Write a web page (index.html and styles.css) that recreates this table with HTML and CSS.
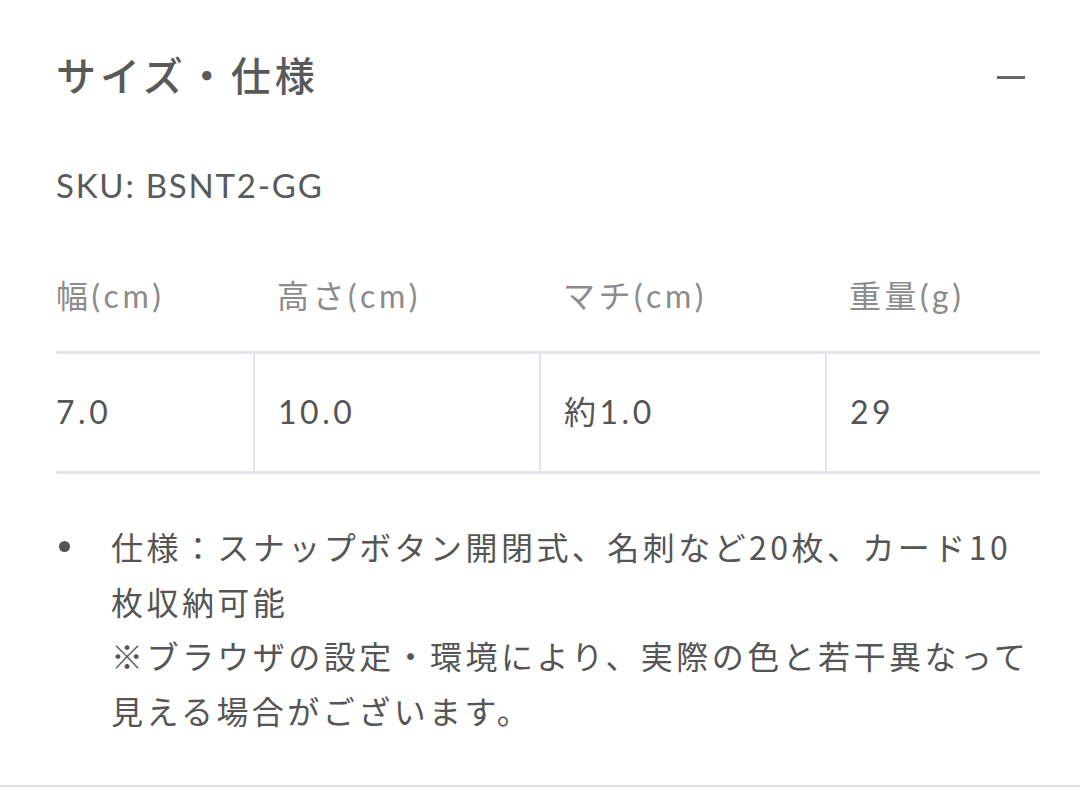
FILE: index.html
```html
<!DOCTYPE html>
<html lang="ja">
<head>
    <meta charset="UTF-8">
    <meta name="viewport" content="width=device-width, initial-scale=1.0">
    <title>サイズ・仕様</title>
    <link rel="stylesheet" href="styles.css">
</head>
<body>

<section class="specs">
  <div class="specs-head">
    <h2 class="specs-title">サイズ・仕様</h2>
    <span class="minus"></span>
  </div>

  <p class="sku">SKU: BSNT2-GG</p>

  <table class="size-table">
    <colgroup>
      <col class="c1"><col class="c2"><col class="c3"><col class="c4">
    </colgroup>
    <thead>
      <tr>
        <th>幅(cm)</th>
        <th>高さ(cm)</th>
        <th>マチ(cm)</th>
        <th>重量(g)</th>
      </tr>
    </thead>
    <tbody>
      <tr>
        <td>7.0</td>
        <td>10.0</td>
        <td>約1.0</td>
        <td>29</td>
      </tr>
    </tbody>
  </table>

  <ul class="notes">
    <li>
      <span class="dot"></span>
      <p>仕様：スナップボタン開閉式、名刺など20枚、カード10<br>枚収納可能<br>※ブラウザの設定・環境により、実際の色と若干異なって<br>見える場合がございます。</p>
    </li>
  </ul>
</section>

</body>
</html>
```

FILE: styles.css
```css
* {
  box-sizing: border-box;
}

body {
  margin: 0;
  background: #fff;
  color: #555;
  font-family: Lato, "Noto Sans CJK JP", sans-serif;
}

.specs {
  padding: 47px 40px 48px 56px;
  border-bottom: 2px solid #dedede;
}

.specs-head {
  display: flex;
  align-items: center;
  justify-content: space-between;
  padding-right: 15px;
  height: 55px;
}

.specs-title {
  margin: 0;
  font-family: "Noto Sans CJK JP", sans-serif;
  font-size: 40px;
  font-weight: 500;
  letter-spacing: 0.1em;
  color: #595959;
  line-height: 55px;
}

.minus {
  width: 28px;
  height: 3px;
  background: #666;
  margin-top: 6px;
}

.sku {
  margin: 59px 0 0;
  font-size: 33px;
  letter-spacing: 1.8px;
  line-height: 48px;
  color: #5a5a5a;
}

.size-table {
  margin-top: 32px;
  width: 984px;
  table-layout: fixed;
  border-collapse: collapse;
  font-size: 32px;
  letter-spacing: 0.11em;
}

.c1 { width: 198px; }
.c2 { width: 286px; }
.c3 { width: 286px; }
.c4 { width: 214px; }

.size-table th {
  text-align: left;
  font-weight: 400;
  color: #8c8c8c;
  line-height: 44px;
  padding: 33px 23px 33px;
}

.size-table td {
  color: #555;
  line-height: 44px;
  padding: 36px 23px 37px;
  border: 3px solid #e3e5ea;
  border-left-width: 2px;
  border-right-width: 2px;
}

.size-table th:first-child,
.size-table td:first-child {
  padding-left: 0;
  border-left: none;
}

.size-table td:last-child {
  border-right: none;
}

.notes {
  list-style: none;
  margin: 45px 0 0;
  padding: 0;
}

.notes li {
  display: flex;
  font-size: 32px;
  letter-spacing: 3.45px;
  line-height: 54.5px;
}

.dot {
  flex: 0 0 auto;
  width: 11px;
  height: 11px;
  border-radius: 50%;
  background: #555;
  margin: 22px 41px 0 3px;
}

.notes p {
  margin: 0;
  white-space: nowrap;
  font-family: "Noto Sans CJK JP", sans-serif;
}
```
